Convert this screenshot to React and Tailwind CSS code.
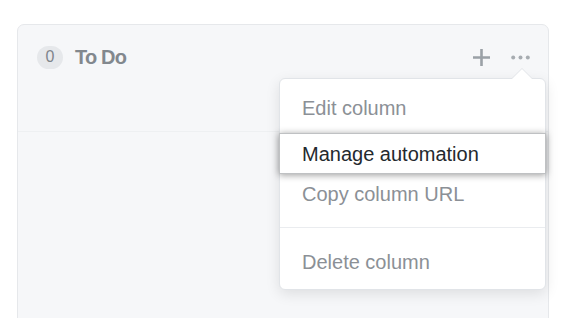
import { useState } from 'react';

const MENU_ITEMS = ['Edit column', 'Manage automation', 'Copy column URL'];

function PlusIcon() {
  return (
    <svg width="19" height="19" viewBox="0 0 19 19" fill="none">
      <path d="M9.5 1v17M1 9.5h17" stroke="#9ba1a7" strokeWidth="2.6" />
    </svg>
  );
}

function DotsIcon() {
  return (
    <svg width="19" height="5" viewBox="0 0 19 5" fill="#a7acb1">
      <circle cx="2.2" cy="2.5" r="2" />
      <circle cx="9.5" cy="2.5" r="2" />
      <circle cx="16.8" cy="2.5" r="2" />
    </svg>
  );
}

export default function App() {
  const [active] = useState('Manage automation');

  return (
    <div className="w-[571px] h-[318px] overflow-hidden bg-white pt-[24px] pl-[17px] font-['Liberation_Sans',Arial,sans-serif]">
      {/* Column */}
      <div className="relative w-[532px] h-[320px] rounded-t-[7px] border border-[#e6e8eb] bg-[#f6f7f9]">
        {/* Header */}
        <div className="h-[107px] border-b border-[#eef0f2]">
          <div className="flex items-center h-[64px] pl-[19px] pr-[18px]">
            <span className="flex items-center justify-center w-[26px] h-[23px] rounded-full bg-[#e6e8eb] text-[16px] text-[#7f858b]">0</span>
            <span className="ml-[12px] text-[20px] font-bold tracking-[-0.8px] text-[#82888e]">To Do</span>
            <div className="ml-auto flex items-center gap-[20px]">
              <PlusIcon />
              <DotsIcon />
            </div>
          </div>
        </div>

        {/* Dropdown menu */}
        <div className="absolute left-[261px] top-[53px] w-[267px] rounded-[6px] border border-[#e1e4e8] bg-white shadow-[0_4px_14px_rgba(0,0,0,0.10)] pt-[7px] pb-[7px]">
          {/* caret */}
          <div className="absolute -top-[11px] left-[231px] w-0 h-0 border-x-[11px] border-x-transparent border-b-[11px] border-b-[#e1e4e8]" />
          <div className="absolute -top-[10px] left-[232px] w-0 h-0 border-x-[10px] border-x-transparent border-b-[10px] border-b-white" />

          {MENU_ITEMS.map((item, i) => (
            item === active ? (
              <div
                key={item}
                className="relative z-10 flex items-center h-[41px] mt-[3px] -mx-px px-[22px] bg-white border border-[#bfc1c3] shadow-[0_1px_7px_rgba(0,0,0,0.40)] text-[20px] text-[#24292e]"
              >
                {item}
              </div>
            ) : (
              <div
                key={item}
                className={`flex items-center px-[22px] text-[20px] text-[#8b9096] ${i === 0 ? 'h-[44px]' : 'h-[40px]'}`}
              >
                {item}
              </div>
            )
          ))}

          <div className="my-[13px] h-px bg-[#eaecef]" />

          <div className="flex items-center h-[41px] px-[22px] text-[20px] text-[#8b9096]">Delete column</div>
        </div>
      </div>
    </div>
  );
}
